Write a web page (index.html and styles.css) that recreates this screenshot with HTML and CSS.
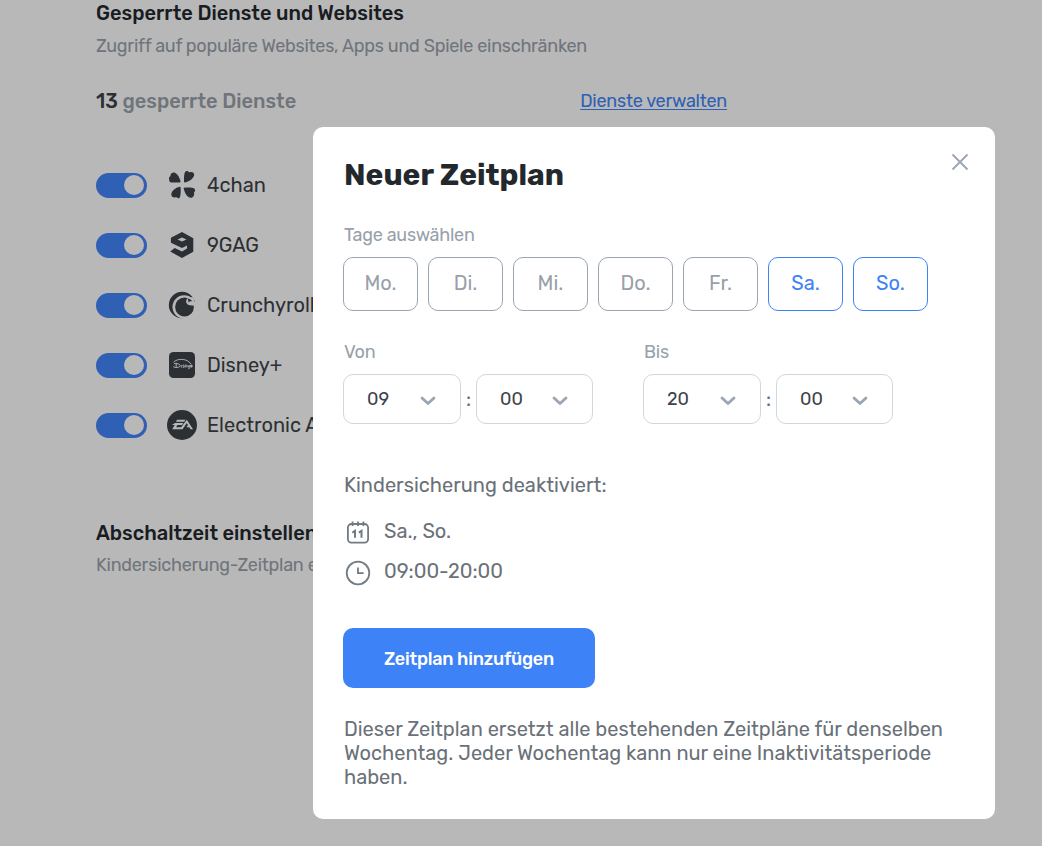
FILE: index.html
```
<!DOCTYPE html>
<html lang="de">
<head>
  <meta charset="UTF-8">
  <meta name="viewport" content="width=device-width, initial-scale=1.0">
  <title>Kindersicherung</title>
  <link rel="stylesheet" href="styles.css">
</head>
<body>
  <main class="page">
    <section class="services">
      <h2 class="section-title">Gesperrte Dienste und Websites</h2>
      <p class="section-desc desc-main">Zugriff auf populäre Websites, Apps und Spiele einschränken</p>
      <div class="summary">
        <div class="count"><strong>13</strong> gesperrte Dienste</div>
        <a class="manage" href="#">Dienste verwalten</a>
      </div>

      <ul class="service-list">
        <li class="service">
          <span class="toggle"></span>
          <svg class="service-icon" viewBox="0 0 30 30">
            <path d="M2.300 9.700C1.500 8.400 2 6.800 3.400 6.300 3.300 3.700 5.600 1.800 8 2.800 11 4.200 12.600 8 13.600 11.300 13.600 12.200 13 12.600 12 12.600H4.200C2.800 12.300 1.900 11 2.300 9.700z"/>
            <path d="M18.200 1.700c1.300-1.200 3-.7 3.700.7C24 1.500 27 2.200 27.200 4.500 27.300 8 22.500 11.500 18.200 12.600 17.400 12.700 17 12.300 17 11.500 16.900 8 17 3.500 18.200 1.700z"/>
            <path d="M13.600 17.400c.3 3.700.2 8.500-1 10.300-1 1-2.700.7-3.300-.6-2.400.9-5-.4-5-2.700C4.500 20.800 8.600 17.800 12.600 16.800 13.300 16.700 13.600 16.900 13.600 17.400z"/>
            <path d="M17 17.800c4.300-.4 8.500-.2 10.200.8 1.400 1 1.200 2.900-.2 3.600.8 2.600-.7 5.300-3 5.600C20.300 27.800 17.800 23.500 16.700 18.600 16.700 18.100 16.700 17.900 17 17.800z"/>
          </svg>
          <span class="service-name">4chan</span>
        </li>
        <li class="service">
          <span class="toggle"></span>
          <svg class="service-icon" viewBox="0 0 30 30">
            <path fill-rule="evenodd" d="M15 2l11.300 6.200v13.500L15 28 3.200 21.600l4.500-3.700L15 21.500l5-2.900v-3.200L15 18 3.900 12.700V7.800zM15 7.600l-4.500 2L15 11.500l4.500-1.900z"/>
          </svg>
          <span class="service-name">9GAG</span>
        </li>
        <li class="service">
          <span class="toggle"></span>
          <svg class="service-icon" viewBox="0 0 30 30">
            <circle cx="15" cy="15" r="13.200"/>
            <circle class="icon-cut" cx="17.200" cy="17" r="11.700"/>
            <circle cx="17.500" cy="17" r="9.400"/>
            <path class="icon-cut" d="M22.700 7.200c-3 1-4.300 3.500-3.200 5.800 1.200 2.500 4.400 2.800 8.500 2.300l-1.500-8z"/>
            <path d="M21 8.400c2.300.5 3.700 1.700 4.600 3.200-1.700-.6-3.200-.3-4.200.8z"/>
          </svg>
          <span class="service-name">Crunchyroll</span>
        </li>
        <li class="service">
          <span class="toggle"></span>
          <svg class="service-icon" viewBox="0 0 30 30">
            <rect x="2" y="2" width="26" height="26" rx="4.500"/>
            <g class="icon-lines">
              <path d="M6.500 12.200C10 8.200 20.500 8 24 14.200"/>
              <path d="M7 13.700c4-.7 7.500 1.200 5.700 2.900-1.200 1.200-4.600 1.200-6.500.1M9.200 12.800v4.700M14.300 15.100v2.500M17.200 15.200c-2-.5-1.800 1-.5 1.100 1.300.3.700 1.500-.9 1.100M18.200 17.400v-2.300c1.400-.3 1.700.5 1.600 2.300M21 15v2c1.400.3 2-.3 2-2M23.100 15.200c.2 2.600-.7 4.200-1.900 3.300M24.600 14.600v3M23.200 16.100h2.800"/>
            </g>
          </svg>
          <span class="service-name">Disney+</span>
        </li>
        <li class="service">
          <span class="toggle"></span>
          <svg class="service-icon" viewBox="0 0 30 30">
            <circle cx="15" cy="15" r="15"/>
            <path class="icon-cut" d="M10.100 9.800h8.300l-1.200 2H8.900zM8 13h8.300l-1.200 2h-4.700l-1.400 2.200h5.200L19.800 9.800 26 19.300h-2.500l-1.200-2h-2.900l1.200-1.900h.6l-1.400-2.300-4.300 6.200H5.200L7.800 15H4.900z"/>
          </svg>
          <span class="service-name">Electronic Arts</span>
        </li>
      </ul>
    </section>

    <section class="downtime">
      <h2 class="section-title">Abschaltzeit einstellen</h2>
      <p class="section-desc">Kindersicherung-Zeitplan erstellen</p>
    </section>
  </main>

  <div class="overlay">
    <div class="modal">
      <div class="modal-head">
        <h1>Neuer Zeitplan</h1>
        <button class="close" aria-label="Schließen">
          <svg width="18" height="18" viewBox="0 0 18 18"><path d="M1.500 1.500l15 15M16.500 1.500l-15 15"/></svg>
        </button>
      </div>

      <div class="label">Tage auswählen</div>
      <div class="days">
        <button class="day">Mo.</button>
        <button class="day">Di.</button>
        <button class="day">Mi.</button>
        <button class="day">Do.</button>
        <button class="day">Fr.</button>
        <button class="day active">Sa.</button>
        <button class="day active">So.</button>
      </div>

      <div class="times">
        <div class="time">
          <div class="label">Von</div>
          <div class="time-fields">
            <div class="select">09 <svg class="arrow" viewBox="0 0 16 10"><path d="M2 2l6 5.500L14 2"/></svg></div>
            <span class="colon">:</span>
            <div class="select minutes">00 <svg class="arrow" viewBox="0 0 16 10"><path d="M2 2l6 5.500L14 2"/></svg></div>
          </div>
        </div>
        <div class="time">
          <div class="label">Bis</div>
          <div class="time-fields">
            <div class="select">20 <svg class="arrow" viewBox="0 0 16 10"><path d="M2 2l6 5.500L14 2"/></svg></div>
            <span class="colon">:</span>
            <div class="select minutes">00 <svg class="arrow" viewBox="0 0 16 10"><path d="M2 2l6 5.500L14 2"/></svg></div>
          </div>
        </div>
      </div>

      <p class="text">Kindersicherung deaktiviert:</p>
      <div class="result">
        <div class="result-row">
          <svg class="result-icon" viewBox="0 0 30 30">
            <rect x="4.900" y="6" width="20.200" height="18.600" rx="3.500"/>
            <path d="M9.600 3.500v4.500M15 3.500v4.500M20.400 3.500v4.500"/>
            <path class="digits" d="M9.300 14.600l2.700-1.700v6.800M15.800 14.600l2.700-1.700v6.800"/>
          </svg>
          <span>Sa., So.</span>
        </div>
        <div class="result-row">
          <svg class="result-icon" viewBox="0 0 30 30">
            <circle cx="15" cy="15" r="11.300"/>
            <path d="M15 9.500v5.700h5.600"/>
          </svg>
          <span>09:00-20:00</span>
        </div>
      </div>

      <button class="submit">Zeitplan hinzufügen</button>
      <p class="text note">Dieser Zeitplan ersetzt alle bestehenden Zeitpläne für denselben Wochentag. Jeder Wochentag kann nur eine Inaktivitätsperiode haben.</p>
    </div>
  </div>
</body>
</html>
```
FILE: styles.css
```
* {
  box-sizing: border-box;
}
body {
  margin: 0;
  height: 100vh;
  overflow: hidden;
  background: #fff;
  color: #3d4349;
  font-family: Rubik, Roboto, sans-serif;
  font-size: 20px;
  line-height: 24px;
}
h1, h2, p, ul {
  margin: 0;
  padding: 0;
}
button {
  font-family: inherit;
  cursor: pointer;
}
.page {
  padding: 1px 0 0 96px;
}
.section-title {
  color: #23282d;
  font-size: 20px;
  font-weight: 500;
}
.section-desc {
  margin-top: 8px;
  color: #9aa2ab;
  font-size: 18px;
  letter-spacing: -0.25px;
}
.desc-main {
  margin-top: 9px;
}
.summary {
  display: flex;
  width: 631px;
  margin-top: 31px;
  justify-content: space-between;
}
.count {
  color: #9aa2ab;
  font-weight: 500;
}
.count strong {
  color: #3d4349;
  font-weight: 500;
}
.manage {
  color: #4285fa;
  font-size: 18px;
  letter-spacing: -0.25px;
  text-decoration: underline;
  text-underline-offset: 2px;
  text-decoration-thickness: 1px;
}

/* service list */
.service-list {
  margin-top: 42px;
  list-style: none;
}
.service {
  display: flex;
  height: 60px;
  align-items: center;
}
.toggle {
  width: 51px;
  height: 25px;
  padding: 2px;
  border-radius: 13px;
  background: #4285fa;
}
.toggle::after {
  content: "";
  display: block;
  width: 20px;
  height: 20px;
  margin-left: 26px;
  border-radius: 50%;
  background: #fff;
}
.service-icon {
  width: 30px;
  height: 30px;
  margin: 0 10px 0 20px;
  fill: #3d4349;
}
.icon-cut {
  fill: #fff;
}
.icon-lines {
  fill: none;
  stroke: #fff;
  stroke-width: 0.9;
}
.downtime {
  margin-top: 66px;
}

/* modal */
.overlay {
  position: fixed;
  inset: 0;
  padding: 127px 47px 27px 313px;
  background: rgba(0, 0, 0, 0.28);
}
.modal {
  height: 692px;
  padding: 26px 26px 0 30px;
  border-radius: 10px;
  background: #fff;
}
.modal-head {
  display: flex;
  height: 70px;
  align-items: flex-start;
  justify-content: space-between;
}
.modal-head h1 {
  padding: 4px 0 0 1px;
  color: #23282d;
  font-size: 30px;
  line-height: 36px;
}
.close {
  display: flex;
  padding: 0;
  border: 0;
  background: none;
}
.close path {
  stroke: #9aa5b1;
  stroke-width: 1.8;
}
.label {
  padding-left: 1px;
  color: #98a0aa;
  font-size: 18px;
  letter-spacing: -0.25px;
}
.days {
  display: flex;
  margin-top: 10px;
  gap: 10px;
}
.day {
  width: 75px;
  height: 54px;
  padding: 0 0 2px;
  border: 1px solid #9aa5b1;
  border-radius: 10px;
  background: #fff;
  color: #98a0aa;
  font-size: 20px;
}
.day.active {
  border-color: #3d82f7;
  color: #3d82f7;
}
.times {
  display: flex;
  margin-top: 29px;
  gap: 50px;
}
.time-fields {
  display: flex;
  margin-top: 10px;
  align-items: center;
}
.select {
  display: flex;
  width: 118px;
  height: 50px;
  padding: 0 24px 0 23px;
  align-items: center;
  justify-content: space-between;
  border: 1px solid #d3d6db;
  border-radius: 10px;
  color: #3d4349;
  font-size: 18px;
}
.select.minutes {
  width: 117px;
}
.arrow {
  width: 16px;
  height: 10px;
  margin-top: 3px;
  fill: none;
  stroke: #9aa5b1;
  stroke-width: 2.8;
  stroke-linecap: round;
  stroke-linejoin: round;
}
.colon {
  width: 15px;
  color: #6a7178;
  text-align: center;
}
.text {
  margin-top: 49px;
  padding-left: 1px;
  color: #6a7178;
}
.result {
  margin-top: 14px;
  color: #6a7178;
}
.result-row {
  display: flex;
  height: 40px;
  gap: 11px;
}
.result-row span {
  margin-top: 8px;
}
.result-icon {
  width: 30px;
  height: 30px;
  margin-top: 7px;
  fill: none;
  stroke: #727a83;
  stroke-width: 1.8;
}
.digits {
  stroke-width: 2;
}
.submit {
  display: block;
  width: 252px;
  height: 60px;
  margin-top: 37px;
  padding: 2px 0 0;
  border: 0;
  border-radius: 10px;
  background: #3d82f7;
  color: #fff;
  font-size: 18px;
  font-weight: 500;
  letter-spacing: -0.25px;
}
.note {
  width: 620px;
  margin-top: 29px;
}
```
